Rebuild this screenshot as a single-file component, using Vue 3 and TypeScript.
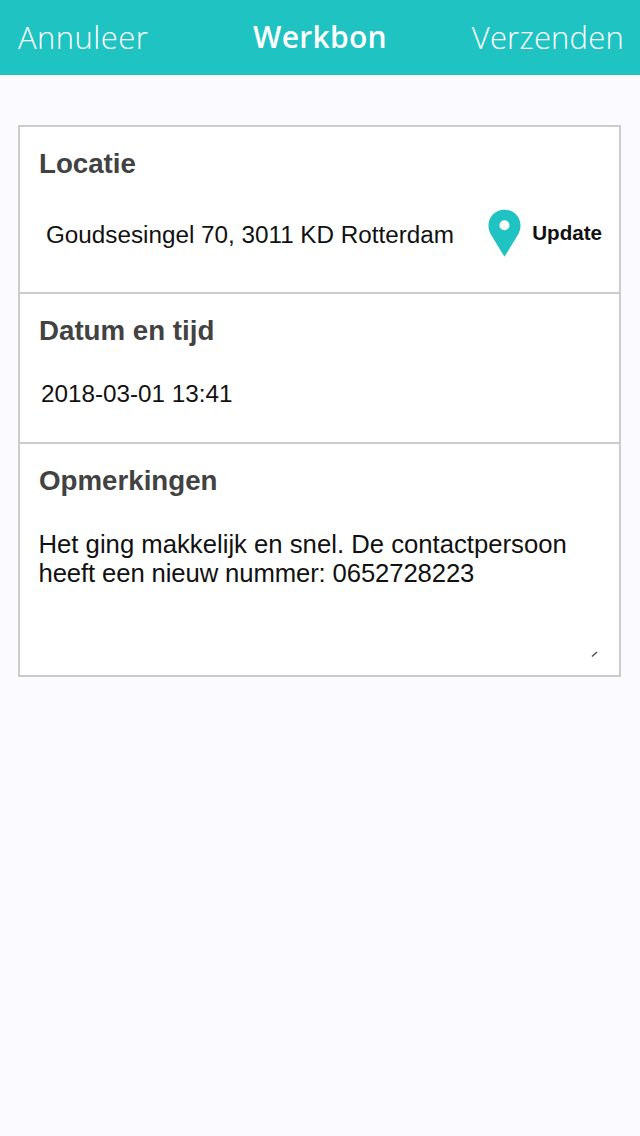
<script setup lang="ts">
const headerTitle: string = 'Werkbon'
</script>

<template>
  <div class="page">
    <header class="bar">
      <span class="action first">Annuleer</span>
      <span class="title">{{ headerTitle }}</span>
      <span class="action end">Verzenden</span>
    </header>
    <main class="card">
      <section class="sec sec-loc">
        <h2>Locatie</h2>
        <div class="loc-row">
          <span class="addr">Goudsesingel 70, 3011 KD Rotterdam</span>
          <span class="update">
            <svg width="33" height="49" viewBox="0 0 34 49">
              <path fill="#1fc3c1" fill-rule="evenodd" d="M17 0C7.6 0 .5 7.3.5 16.2c0 3.4 1 6.2 2.3 9.1L17 48.5l14.2-23.2c1.3-2.9 2.3-5.7 2.3-9.1C33.500 7.300 26.400 0 17 0Zm0 10.800a5.200 5.200 0 1 1 0 10.400 5.200 5.200 0 0 1 0-10.400Z"/>
            </svg>
            <b>Update</b>
          </span>
        </div>
      </section>
      <section class="sec sec-date">
        <h2>Datum en tijd</h2>
        <div class="date">2018-03-01 13:41</div>
      </section>
      <section class="sec sec-notes">
        <h2>Opmerkingen</h2>
        <p class="notes">Het ging makkelijk en snel. De contactpersoon<br><span class="line2">heeft een nieuw nummer: 0652728223</span></p>
        <svg class="grip" width="8" height="8" viewBox="0 0 8 8"><path d="M1 6.500 6 2" stroke="#555" stroke-width="1.600"/></svg>
      </section>
    </main>
  </div>
</template>

<style>
html, body { margin: 0; background: #fbfbff; }
</style>

<style scoped>
.page {
  width: 640px;
  height: 1136px;
  background: #fbfbff;
  font-family: "Liberation Sans", Arial, sans-serif;
  overflow: hidden;
}
.bar {
  height: 75px;
  box-sizing: border-box;
  background: #1fc3c1;
  color: #fff;
  display: grid;
  grid-template-columns: 1fr auto 1fr;
  align-items: center;
  padding: 0 16px 2px 18px;
  font-family: "Open Sans", sans-serif;
  font-size: 31px;
  letter-spacing: 0.2px;
}
.action { font-weight: 300; }
.first { letter-spacing: 0.45px; }
.end { text-align: right; }
.title { font-weight: 600; font-size: 30px; letter-spacing: 0.3px; margin-left: -2px; }
.card {
  box-sizing: border-box;
  width: 603px;
  height: 552px;
  margin: 50px 0 0 18px;
  background: #fff;
  border: 2px solid #ccc;
  display: flex;
  flex-direction: column;
}
.sec { box-sizing: border-box; padding: 21px 19px 0; position: relative; }
.sec + .sec { border-top: 2px solid #ccc; }
.sec-loc { height: 165px; }
.sec-date { height: 150px; }
.sec-notes { flex: 1; }
h2 {
  margin: 0;
  font-size: 27.7px;
  line-height: 32px;
  font-weight: 700;
  color: #424242;
}
.loc-row {
  display: flex;
  align-items: center;
  justify-content: space-between;
  margin-top: 32px;
  margin-right: -2px;
  padding-left: 7px;
}
.addr { font-size: 24.25px; color: #111; }
.update { display: flex; align-items: center; gap: 11px; margin-top: -3px; }
.update b { font-size: 20.6px; color: #111; margin-bottom: 2px; }
.date { margin-top: 33px; margin-left: 2px; font-size: 24.25px; line-height: 28px; color: #111; }
.notes { margin: 33px 0 0 -0.5px; font-size: 25.7px; line-height: 29px; color: #111; }
.line2 { letter-spacing: -0.12px; }
.grip { position: absolute; right: 20px; bottom: 17px; }
</style>
